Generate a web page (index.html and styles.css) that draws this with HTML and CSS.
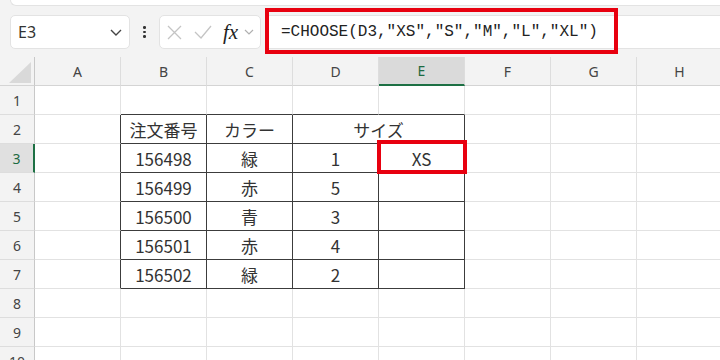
FILE: index.html
```html
<!DOCTYPE html>
<html lang="ja">
<head>
    <meta charset="UTF-8">
    <meta name="viewport" content="width=device-width, initial-scale=1.0">
    <title>CHOOSE関数</title>
    <link rel="stylesheet" href="styles.css">
</head>
<body>
    <div class="ribbon"></div>

    <div class="bar">
        <div class="namebox">
            <span>E3</span>
            <svg width="12" height="7" viewBox="0 0 12 7"><path d="M1 1l5 5 5-5" fill="none" stroke="#444" stroke-width="1.4"/></svg>
        </div>
        <div class="dots"><i></i><i></i><i></i></div>
        <div class="fxbox">
            <svg class="ico-x" width="15" height="15" viewBox="0 0 15 15"><path d="M1 1l13 13M14 1L1 14" stroke="#c4c4c4" stroke-width="1.3"/></svg>
            <svg class="ico-ok" width="18" height="14" viewBox="0 0 18 14"><path d="M1 7l6 6L17 1" fill="none" stroke="#c4c4c4" stroke-width="1.3"/></svg>
            <span class="fx">fx</span>
            <svg class="ico-dd" width="10" height="6" viewBox="0 0 10 6"><path d="M1 1l4 4 4-4" fill="none" stroke="#b0b0b0" stroke-width="1.2"/></svg>
        </div>
        <div class="formula">
            <span>=CHOOSE(D3,"XS","S","M","L","XL")</span>
            <div class="mark mark-formula"></div>
        </div>
    </div>

    <div class="sheet">
        <!-- 列見出し -->
        <div class="corner"><svg width="22" height="21" viewBox="0 0 22 21"><polygon points="22,0 22,21 0,21" fill="#d9d9d9"/></svg></div>
        <div class="ch">A</div>
        <div class="ch">B</div>
        <div class="ch">C</div>
        <div class="ch">D</div>
        <div class="ch sel">E</div>
        <div class="ch">F</div>
        <div class="ch">G</div>
        <div class="ch">H</div>

        <!-- 1 -->
        <div class="rh">1</div>
        <div class="c"></div>
        <div class="c tt"></div>
        <div class="c tt"></div>
        <div class="c tt"></div>
        <div class="c tt"></div>
        <div class="c"></div>
        <div class="c"></div>
        <div class="c"></div>

        <!-- 2 -->
        <div class="rh">2</div>
        <div class="c tl"></div>
        <div class="c t">注文番号</div>
        <div class="c t">カラー</div>
        <div class="c t span2">サイズ</div>
        <div class="c"></div>
        <div class="c"></div>
        <div class="c"></div>

        <!-- 3 -->
        <div class="rh sel">3</div>
        <div class="c tl"></div>
        <div class="c t">156498</div>
        <div class="c t">緑</div>
        <div class="c t">1</div>
        <div class="c t e3">XS<div class="mark mark-cell"></div></div>
        <div class="c"></div>
        <div class="c"></div>
        <div class="c"></div>

        <!-- 4 -->
        <div class="rh">4</div>
        <div class="c tl"></div>
        <div class="c t">156499</div>
        <div class="c t">赤</div>
        <div class="c t">5</div>
        <div class="c t"></div>
        <div class="c"></div>
        <div class="c"></div>
        <div class="c"></div>

        <!-- 5 -->
        <div class="rh">5</div>
        <div class="c tl"></div>
        <div class="c t">156500</div>
        <div class="c t">青</div>
        <div class="c t">3</div>
        <div class="c t"></div>
        <div class="c"></div>
        <div class="c"></div>
        <div class="c"></div>

        <!-- 6 -->
        <div class="rh">6</div>
        <div class="c tl"></div>
        <div class="c t">156501</div>
        <div class="c t">赤</div>
        <div class="c t">4</div>
        <div class="c t"></div>
        <div class="c"></div>
        <div class="c"></div>
        <div class="c"></div>

        <!-- 7 -->
        <div class="rh">7</div>
        <div class="c tl"></div>
        <div class="c t">156502</div>
        <div class="c t">緑</div>
        <div class="c t">2</div>
        <div class="c t"></div>
        <div class="c"></div>
        <div class="c"></div>
        <div class="c"></div>

        <!-- 8 -->
        <div class="rh">8</div>
        <div class="c"></div>
        <div class="c"></div>
        <div class="c"></div>
        <div class="c"></div>
        <div class="c"></div>
        <div class="c"></div>
        <div class="c"></div>
        <div class="c"></div>

        <!-- 9 -->
        <div class="rh">9</div>
        <div class="c"></div>
        <div class="c"></div>
        <div class="c"></div>
        <div class="c"></div>
        <div class="c"></div>
        <div class="c"></div>
        <div class="c"></div>
        <div class="c"></div>

        <!-- 10 -->
        <div class="rh">10</div>
        <div class="c"></div>
        <div class="c"></div>
        <div class="c"></div>
        <div class="c"></div>
        <div class="c"></div>
        <div class="c"></div>
        <div class="c"></div>
        <div class="c"></div>
    </div>
</body>
</html>
```

FILE: styles.css
```css
body {
    margin: 0;
    width: 720px;
    height: 360px;
    overflow: hidden;
    background-color: #f3f3f3;
    font-family: "Noto Sans", "Noto Sans CJK JP", sans-serif;
}

.ribbon {
    height: 5px;
    margin-left: 10px;
    background-color: #fff;
    border-left: 1px solid #e3e3e3;
    border-bottom: 1px solid #e3e3e3;
    border-bottom-left-radius: 6px;
}

.bar {
    display: flex;
    align-items: center;
    height: 34px;
    padding: 9px 0 8px 10px;
}

.namebox,
.fxbox {
    box-sizing: border-box;
    height: 34px;
    display: flex;
    align-items: center;
    background-color: #fff;
    border: 1px solid #e3e3e3;
    border-radius: 5px;
}

.namebox {
    width: 120px;
    justify-content: space-between;
    padding: 0 7px 0 7px;
    font-size: 16px;
    color: #333;
}

.dots {
    width: 29px;
    display: flex;
    flex-direction: column;
    align-items: center;
    gap: 2px;
}
.dots i {
    width: 2.5px;
    height: 2.5px;
    border-radius: 50%;
    background-color: #333;
}

.fxbox {
    width: 102px;
    padding-left: 7px;
}
.ico-ok {
    margin-left: 12px;
}
.fx {
    margin-left: 11px;
    font-family: "Liberation Serif", serif;
    font-style: italic;
    font-size: 21px;
    color: #222;
    line-height: 1;
}
.ico-dd {
    margin-left: 6px;
}

.formula {
    flex: 1;
    box-sizing: border-box;
    height: 34px;
    margin-left: 4px;
    padding-left: 15px;
    position: relative;
    display: flex;
    align-items: center;
    background-color: #fff;
    border: 1px solid #e3e3e3;
    border-right: 0;
    font-family: "Liberation Mono", monospace;
    font-size: 16px;
    color: #222;
}

.mark {
    position: absolute;
    box-sizing: border-box;
    border: 4px solid #e8000f;
}
.mark-formula {
    left: -1px;
    top: -8px;
    width: 353px;
    height: 46px;
}
.mark-cell {
    left: -2px;
    top: -4px;
    width: 90px;
    height: 34px;
}

/* シート */
.sheet {
    display: grid;
    grid-template-columns: 35px repeat(8, 86px);
    grid-auto-rows: 29px;
}

.sheet > div {
    box-sizing: border-box;
    display: flex;
    align-items: center;
    justify-content: center;
}

.corner {
    border-right: 1px solid #c8c8c8;
    border-bottom: 1px solid #d4d4d4;
    align-items: flex-end !important;
    justify-content: flex-end !important;
    padding: 0 3px 2px 0;
}

.ch {
    border-right: 1px solid #dddddd;
    border-bottom: 1px solid #d4d4d4;
    font-size: 14px;
    color: #444;
}
.ch.sel {
    background-color: #dadada;
    border-bottom: 2px solid #1d7044;
    color: #1d6a42;
}

.rh {
    border-right: 1px solid #c8c8c8;
    border-bottom: 1px solid #dddddd;
    font-size: 14px;
    color: #444;
}
.rh.sel {
    background-color: #e0e0e0;
    border-right: 2px solid #1d7044;
    color: #1d6a42;
}

.c {
    background-color: #fff;
    border-right: 1px solid #e2e2e2;
    border-bottom: 1px solid #e2e2e2;
    font-family: "Noto Sans CJK JP", sans-serif;
    font-size: 17px;
    color: #333;
}
.t {
    border-right-color: #3c3c3c;
    border-bottom-color: #3c3c3c;
}
.tl {
    border-right-color: #3c3c3c;
}
.tt {
    border-bottom-color: #3c3c3c;
}
.span2 {
    grid-column: span 2;
}
.e3 {
    position: relative;
}
```
